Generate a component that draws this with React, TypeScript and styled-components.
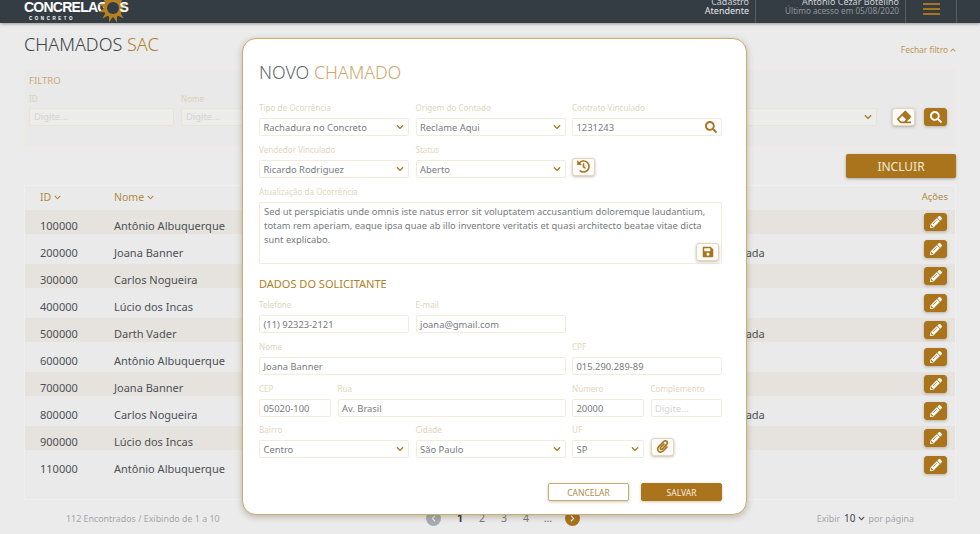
import React from "react";
import styled, { createGlobalStyle } from "styled-components";
import { FaChevronDown, FaChevronLeft, FaChevronRight, FaChevronUp, FaEraser, FaHistory, FaPaperclip, FaPencilAlt, FaSave, FaSearch } from "react-icons/fa";

const GOLD = "#a9741c";
const FONT = '"Noto Sans", "Open Sans", "Liberation Sans", sans-serif';

const Global = createGlobalStyle`
  html, body { margin: 0; padding: 0; height: 534px; overflow: hidden; background: #ebebeb; font-family: ${FONT}; }
  * { box-sizing: border-box; }
`;

const Page = styled.div`
  position: relative;
  width: 980px;
  height: 534px;
  overflow: hidden;
  background: #ebebeb;
`;

const Header = styled.header`
  height: 23px;
  background: #353d44;
  box-shadow: 0 1px 3px rgba(0, 0, 0, 0.35);
  display: flex;
  align-items: flex-end;
  overflow: hidden;
  padding-left: 24px;
`;

const Logo = styled.div`
  display: flex;
  flex-direction: column;
  width: 110px;
  height: 23px;
  color: #fff;
  font-family: "Liberation Sans", sans-serif;
`;
const LogoWord = styled.div`
  display: flex;
  align-items: center;
  height: 15px;
  font-size: 14px;
  font-weight: 700;
  letter-spacing: -0.75px;
  line-height: 15px;
`;
const Sun = styled.svg`
  width: 30px;
  height: 30px;
  margin: 0 -9px;
  flex: none;
`;
const LogoSub = styled.div`
  font-size: 4.5px;
  font-weight: 700;
  letter-spacing: 2.55px;
  line-height: 5px;
  margin: 1px 0 0 5px;
`;

const HeaderRight = styled.div`
  margin-left: auto;
  display: flex;
  height: 23px;
  align-items: stretch;
  padding-right: 23px;
`;
const HeaderCell = styled.div<{ $w: number }>`
  width: ${(p) => p.$w}px;
  padding-right: 6px;
  border-right: 1px solid #565d63;
  display: flex;
  flex-direction: column;
  justify-content: flex-end;
  align-items: flex-end;
  padding-bottom: 8px;
  white-space: nowrap;
`;
const FirstLine = styled.div`
  font-size: 9px;
  line-height: 9px;
  color: #cfd2d4;
`;
const SecondLine = styled.div<{ $dim?: boolean }>`
  font-size: ${(p) => (p.$dim ? 8.2 : 9)}px;
  line-height: 9px;
  color: ${(p) => (p.$dim ? "#8f9499" : "#e6e7e8")};
`;
const BurgerCell = styled.div`
  width: 51px;
  border-right: 1px solid #565d63;
  display: flex;
  flex-direction: column;
  gap: 3px;
  padding: 3px 0 0 17px;
`;
const BurgerBar = styled.span`
  display: block;
  width: 17px;
  height: 2px;
  background: ${GOLD};
`;

const Main = styled.main`
  padding: 0 24px;
`;
const TitleRow = styled.div`
  height: 46px;
  display: flex;
  justify-content: space-between;
`;
const PageTitle = styled.h1`
  margin: 9px 0 0;
  font-size: 18px;
  line-height: 25px;
  font-weight: 300;
  color: #3b4248;
`;
const Accent = styled.span<{ $soft?: boolean }>`
  color: ${(p) => (p.$soft ? "#c8a96b" : "#ad7f2a")};
`;
const FilterToggle = styled.div`
  margin-top: 21px;
  align-self: flex-start;
  font-size: 8.4px;
  line-height: 12px;
  color: #b99758;
  display: flex;
  align-items: center;
  gap: 2px;
`;

const FilterPanel = styled.section`
  height: 78px;
  background: #e9e9e9;
  border: 1px solid #eeeae2;
  padding: 4px 8px 0 4px;
`;
const FilterTitle = styled.div`
  font-size: 9.5px;
  line-height: 13px;
  color: #c9ab74;
`;
const FilterRow = styled.div`
  display: flex;
  align-items: flex-end;
  margin-top: 6px;
`;
const FilterField = styled.div<{ $w: number }>`
  width: ${(p) => p.$w}px;
  margin-right: 7px;
  flex: none;
`;
const FilterLabel = styled.div`
  font-size: 8.1px;
  line-height: 12px;
  height: 15px;
  color: #ddd0b6;
`;
const FilterInput = styled.div`
  height: 18px;
  border: 1px solid #e9e3d4;
  background: #ececea;
  border-radius: 1px;
  font-size: 9.4px;
  line-height: 16px;
  padding-left: 4px;
  color: #d5d5d3;
  white-space: nowrap;
  overflow: hidden;
`;
const FilterSelect = styled(FilterInput)`
  display: flex;
  align-items: center;
  justify-content: flex-end;
  padding-right: 4px;
  color: ${GOLD};
  font-size: 8px;
  margin-left: auto;
  width: 177px;
`;
const FilterSpacer = styled.div`
  flex: 1;
`;
const IconBtn = styled.button<{ $filled?: boolean }>`
  width: 23px;
  height: 18px;
  padding: 0;
  border-radius: 3px;
  border: 1px solid ${(p) => (p.$filled ? GOLD : "#e3d6bd")};
  background: ${(p) => (p.$filled ? GOLD : "#fdfcfa")};
  color: ${(p) => (p.$filled ? "#fff" : GOLD)};
  box-shadow: 0 1px 3px rgba(90, 70, 30, 0.35);
  display: inline-flex;
  align-items: center;
  justify-content: center;
  font-size: 12px;
  flex: none;
`;
const FilterActions = styled.div`
  display: flex;
  gap: 9px;
  margin-left: 15px;
`;

const IncludeRow = styled.div`
  display: flex;
  justify-content: flex-end;
  padding-top: 7px;
  height: 38px;
`;
const IncludeBtn = styled.button`
  width: 110px;
  height: 24px;
  border: 0;
  border-radius: 2px;
  background: ${GOLD};
  color: #f2ead9;
  font-family: ${FONT};
  font-size: 12px;
  box-shadow: 0 1px 3px rgba(0, 0, 0, 0.3);
`;

const TablePanel = styled.section`
  height: 315px;
  border: 1px solid #efefef;
  background: #eaeaea;
`;
const THead = styled.div`
  display: flex;
  height: 24px;
  align-items: flex-start;
  padding-top: 4px;
  color: #b08a44;
  line-height: 14px;
`;
const HeadCell = styled.div<{ $w?: number; $right?: boolean }>`
  ${(p) => (p.$w ? `width: ${p.$w}px;` : "flex: 1;")}
  ${(p) => (p.$right ? "padding-right: 7px;" : "")}
  display: flex;
  align-items: center;
  gap: 3px;
  justify-content: ${(p) => (p.$right ? "flex-end" : "flex-start")};
  font-size: ${(p) => (p.$right ? 9.5 : 10.5)}px;
`;
const IdHead = styled(HeadCell)`
  padding-left: 15px;
`;
const TBody = styled.div`
  display: flex;
  flex-direction: column;
  gap: 3px;
`;
const Row = styled.div<{ $stripe: boolean }>`
  display: flex;
  height: 24px;
  align-items: center;
  background: ${(p) => (p.$stripe ? "#e6e3de" : "transparent")};
  color: #4c5156;
  font-size: 11px;
`;
const IdCell = styled.div`
  width: 89px;
  padding: 6px 0 0 15px;
`;
const NameCell = styled.div`
  width: 597px;
  padding-top: 6px;
  white-space: nowrap;
`;
const StatusCell = styled.div`
  flex: 1;
  padding-top: 6px;
`;
const EditCell = styled.div`
  padding-right: 8px;
  display: flex;
`;

const FooterBar = styled.footer`
  display: flex;
  align-items: center;
  height: 34px;
  padding: 2px 42px 0 42px;
  font-size: 8.9px;
  color: #a5a7a9;
`;
const Count = styled.div`
  width: 362px;
`;
const Pager = styled.div`
  display: flex;
  align-items: center;
  width: 393px;
`;
const PageDot = styled.span<{ $on?: boolean }>`
  width: 15px;
  height: 15px;
  border-radius: 50%;
  background: ${(p) => (p.$on ? GOLD : "#a9adb1")};
  color: #efefef;
  display: inline-flex;
  align-items: center;
  justify-content: center;
  font-size: 7px;
`;
const PageNum = styled.span<{ $on?: boolean }>`
  width: 22px;
  text-align: center;
  font-size: 10.5px;
  color: ${(p) => (p.$on ? "#33393e" : "#72777b")};
  font-weight: ${(p) => (p.$on ? 700 : 400)};
`;
const PagerGap = styled.span<{ $w: number }>`
  width: ${(p) => p.$w}px;
`;
const PerPage = styled.div`
  margin-left: auto;
  white-space: nowrap;
  display: flex;
  align-items: center;
  gap: 2px;
`;
const PerValue = styled.span`
  color: #3f454a;
  font-size: 10px;
  display: inline-flex;
  align-items: center;
  gap: 2px;
  margin: 0 2px;
`;

const Modal = styled.section`
  position: absolute;
  left: 242px;
  top: 38px;
  width: 505px;
  height: 477px;
  background: #fff;
  border: 1px solid #c9ac6e;
  border-radius: 14px;
  box-shadow: 0 2px 6px rgba(80, 60, 20, 0.3);
  padding: 0 24px 0 16px;
`;
const ModalTitle = styled.h2`
  margin: 19px 0 0;
  font-size: 17.8px;
  line-height: 28px;
  font-weight: 300;
  color: #62676b;
`;
const FormRow = styled.div<{ $cols: string; $top: number }>`
  display: grid;
  grid-template-columns: ${(p) => p.$cols};
  column-gap: 6.5px;
  margin-top: ${(p) => p.$top}px;
  align-items: end;
`;
const Field = styled.div`
  min-width: 0;
`;
const Label = styled.label`
  display: block;
  font-size: 8.1px;
  line-height: 11px;
  height: 16px;
  color: #e2d6bd;
  white-space: nowrap;
`;
const Control = styled.div<{ $placeholder?: boolean }>`
  height: 18px;
  border: 1px solid #f3ecdd;
  border-radius: 2px;
  background: #fff;
  padding: 0 4px 0 3.5px;
  display: flex;
  align-items: center;
  justify-content: space-between;
  font-size: 9.4px;
  color: ${(p) => (p.$placeholder ? "#d6d6d6" : "#777b7e")};
  white-space: nowrap;
  svg { color: ${GOLD}; flex: none; }
`;
const TextBox = styled.div`
  position: relative;
  height: 62px;
  border: 1px solid #f3ecdd;
  border-radius: 2px;
  padding: 2px 4px;
  font-size: 9.4px;
  line-height: 14px;
  color: #777b7e;
`;
const SaveBtn = styled(IconBtn)`
  position: absolute;
  right: 2px;
  bottom: 2px;
`;
const SectionTitle = styled.h3`
  margin: 12px 0 0;
  font-size: 11px;
  line-height: 15px;
  font-weight: 400;
  color: #ae7f25;
`;
const Actions = styled.div`
  display: flex;
  justify-content: flex-end;
  gap: 12px;
  margin-top: 25px;
`;
const ActionBtn = styled.button<{ $primary?: boolean }>`
  width: 81px;
  height: 18px;
  padding: 0;
  border: 1px solid ${(p) => (p.$primary ? GOLD : "#c9ac6e")};
  border-radius: 2px;
  background: ${(p) => (p.$primary ? GOLD : "#fff")};
  color: ${(p) => (p.$primary ? "#f6efe0" : "#b08a44")};
  font-family: ${FONT};
  font-size: 8.5px;
  box-shadow: 0 1px 3px rgba(90, 70, 30, 0.3);
`;

const rows = [
  ["100000", "Antônio Albuquerque", ""],
  ["200000", "Joana Banner", "Infundada"],
  ["300000", "Carlos Nogueira", ""],
  ["400000", "Lúcio dos Incas", ""],
  ["500000", "Darth Vader", "Infundada"],
  ["600000", "Antônio Albuquerque", ""],
  ["700000", "Joana Banner", ""],
  ["800000", "Carlos Nogueira", "Infundada"],
  ["900000", "Lúcio dos Incas", ""],
  ["110000", "Antônio Albuquerque", ""],
];

const Chev = () => <FaChevronDown size={8} />;

const SunIcon = () => (
  <Sun viewBox="0 0 30 30" aria-hidden="true">
    <g fill="#b5801f">
      {Array.from({ length: 12 }).map((_, i) => (
        <polygon key={i} points="12.6,8 17.4,8 15,0" transform={`rotate(${i * 30 + 15} 15 15)`} />
      ))}
    </g>
    <circle cx="15" cy="15" r="9.5" fill="#b5801f" />
    <circle cx="15" cy="15" r="6" fill="#353d44" />
  </Sun>
);

const F = ({ label, value, select, placeholder, icon }: { label: string; value: string; select?: boolean; placeholder?: boolean; icon?: React.ReactNode }) => (
  <Field>
    <Label>{label}</Label>
    <Control $placeholder={placeholder}>
      <span>{value}</span>
      {select ? <Chev /> : icon}
    </Control>
  </Field>
);

export default function App() {
  return (
    <Page>
      <Global />
      <Header>
        <Logo>
          <LogoWord>
            CONCRELAG
            <SunIcon />
            S
          </LogoWord>
          <LogoSub>CONCRETO</LogoSub>
        </Logo>
        <HeaderRight>
          <HeaderCell $w={100}>
            <FirstLine>Cadastro</FirstLine>
            <SecondLine>Atendente</SecondLine>
          </HeaderCell>
          <HeaderCell $w={150}>
            <FirstLine>Antônio Cezar Boteilho</FirstLine>
            <SecondLine $dim>Último acesso em 05/08/2020</SecondLine>
          </HeaderCell>
          <BurgerCell>
            <BurgerBar />
            <BurgerBar />
            <BurgerBar />
          </BurgerCell>
        </HeaderRight>
      </Header>

      <Main>
        <TitleRow>
          <PageTitle>
            CHAMADOS <Accent>SAC</Accent>
          </PageTitle>
          <FilterToggle>
            Fechar filtro <FaChevronUp size={6} />
          </FilterToggle>
        </TitleRow>

        <FilterPanel>
          <FilterTitle>FILTRO</FilterTitle>
          <FilterRow>
            <FilterField $w={145}>
              <FilterLabel>ID</FilterLabel>
              <FilterInput>Digite...</FilterInput>
            </FilterField>
            <FilterField $w={145}>
              <FilterLabel>Nome</FilterLabel>
              <FilterInput>Digite...</FilterInput>
            </FilterField>
            <FilterSpacer />
            <FilterSelect>
              <FaChevronDown />
            </FilterSelect>
            <FilterActions>
              <IconBtn>
                <FaEraser size={14} />
              </IconBtn>
              <IconBtn $filled>
                <FaSearch />
              </IconBtn>
            </FilterActions>
          </FilterRow>
        </FilterPanel>

        <IncludeRow>
          <IncludeBtn>INCLUIR</IncludeBtn>
        </IncludeRow>

        <TablePanel>
          <THead>
            <IdHead $w={89}>
              ID <FaChevronDown size={7} />
            </IdHead>
            <HeadCell>
              Nome <FaChevronDown size={7} />
            </HeadCell>
            <HeadCell $w={80} $right>
              Ações
            </HeadCell>
          </THead>
          <TBody>
            {rows.map((r, i) => (
              <Row key={r[0]} $stripe={i % 2 === 0}>
                <IdCell>{r[0]}</IdCell>
                <NameCell>{r[1]}</NameCell>
                <StatusCell>{r[2]}</StatusCell>
                <EditCell>
                  <IconBtn $filled>
                    <FaPencilAlt />
                  </IconBtn>
                </EditCell>
              </Row>
            ))}
          </TBody>
        </TablePanel>

        <FooterBar>
          <Count>112 Encontrados / Exibindo de 1 a 10</Count>
          <Pager>
            <PageDot>
              <FaChevronLeft />
            </PageDot>
            <PagerGap $w={8} />
            <PageNum $on>1</PageNum>
            <PageNum>2</PageNum>
            <PageNum>3</PageNum>
            <PageNum>4</PageNum>
            <PageNum>...</PageNum>
            <PagerGap $w={6} />
            <PageDot $on>
              <FaChevronRight />
            </PageDot>
          </Pager>
          <PerPage>
            Exibir
            <PerValue>
              10 <FaChevronDown size={7} />
            </PerValue>
            por página
          </PerPage>
        </FooterBar>
      </Main>

      <Modal>
        <ModalTitle>
          NOVO <Accent $soft>CHAMADO</Accent>
        </ModalTitle>

        <FormRow $cols="150px 150px 150px" $top={16}>
          <F label="Tipo de Ocorrência" value="Rachadura no Concreto" select />
          <F label="Origem do Contado" value="Reclame Aqui" select />
          <F label="Contrato Vinculado" value="1231243" icon={<FaSearch size={12} />} />
        </FormRow>
        <FormRow $cols="150px 150px 150px" $top={8}>
          <F label="Vendedor Vinculado" value="Ricardo Rodriguez" select />
          <F label="Status" value="Aberto" select />
          <Field>
            <IconBtn>
              <FaHistory size={13} />
            </IconBtn>
          </Field>
        </FormRow>
        <FormRow $cols="1fr" $top={8}>
          <Field>
            <Label>Atualização da Ocorrência</Label>
            <TextBox>
              Sed ut perspiciatis unde omnis iste natus error sit voluptatem accusantium doloremque laudantium, totam rem aperiam, eaque ipsa quae ab illo inventore veritatis et quasi architecto beatae vitae dicta sunt explicabo.
              <SaveBtn>
                <FaSave size={12} />
              </SaveBtn>
            </TextBox>
          </Field>
        </FormRow>

        <SectionTitle>DADOS DO SOLICITANTE</SectionTitle>
        <FormRow $cols="150px 150px" $top={8}>
          <F label="Telefone" value="(11) 92323-2121" />
          <F label="E-mail" value="joana@gmail.com" />
        </FormRow>
        <FormRow $cols="306.5px 150px" $top={8}>
          <F label="Nome" value="Joana Banner" />
          <F label="CPF" value="015.290.289-89" />
        </FormRow>
        <FormRow $cols="72px 228px 72px 71.5px" $top={8}>
          <F label="CEP" value="05020-100" />
          <F label="Rua" value="Av. Brasil" />
          <F label="Número" value="20000" />
          <F label="Complemento" value="Digite..." placeholder />
        </FormRow>
        <FormRow $cols="150px 150px 72px 71.5px" $top={7}>
          <F label="Bairro" value="Centro" select />
          <F label="Cidade" value="São Paulo" select />
          <F label="UF" value="SP" select />
          <Field>
            <IconBtn>
              <FaPaperclip size={13} />
            </IconBtn>
          </Field>
        </FormRow>

        <Actions>
          <ActionBtn>CANCELAR</ActionBtn>
          <ActionBtn $primary>SALVAR</ActionBtn>
        </Actions>
      </Modal>
    </Page>
  );
}
